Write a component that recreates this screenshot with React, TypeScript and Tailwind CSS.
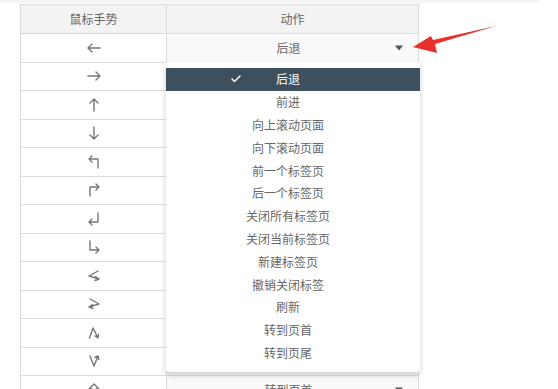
import { Check } from 'lucide-react';

// gesture drawings, viewBox 0 0 16 16
const gestures: string[] = [
  'M14 8H2 M6 4L2 8l4 4',
  'M2 8h12 M10 4l4 4-4 4',
  'M8 14V2 M4 6l4-4 4 4',
  'M8 2v12 M4 10l4 4 4-4',
  'M12 14V5H3 M6 2L3 5l3 3',
  'M4 14V5h9 M10 2l3 3-3 3',
  'M12 2v9H3 M6 8l-3 3 3 3',
  'M4 2v9h9 M10 8l3 3-3 3',
  'M12 3L3 8l10 3 M9.5 8.5l3.5 2.5-4 1.5',
  'M4 3l9 5-10 3 M6.5 8.5L3 11l4 1.5',
  'M3.5 13L7 3l5 10 M9 11l3 2 0.5-3.5',
  'M4 3l4 10 4-10 M9 4.5L12 3l0.8 3.5',
  'M8 2l5 5h-3v7H6V7H3z',
];

const actions = [
  '后退',
  '前进',
  '向上滚动页面',
  '向下滚动页面',
  '前一个标签页',
  '后一个标签页',
  '关闭所有标签页',
  '关闭当前标签页',
  '新建标签页',
  '撤销关闭标签',
  '刷新',
  '转到页首',
  '转到页尾',
];

// only the first and the last select show; the others sit under the open menu
const rowValues: (string | null)[] = ['后退', null, null, null, null, null, null, null, null, null, null, null, '转到页首'];

const Gesture = ({ d }: { d: string }) => (
  <svg width="16" height="16" viewBox="0 0 16 16" fill="none" stroke="#777" strokeWidth="1.4" strokeLinecap="round" strokeLinejoin="round">
    <path d={d} />
  </svg>
);

const Caret = () => (
  <span className="absolute right-[15px] top-1/2 -translate-y-1/2 w-0 h-0 border-l-[4px] border-r-[4px] border-t-[5px] border-l-transparent border-r-transparent border-t-[#555]" />
);

export default function App() {
  return (
    <div
      className="relative w-[558px] h-[389px] overflow-hidden bg-white text-[12px] text-[#666]"
      style={{ fontFamily: '"Noto Sans CJK SC", "Noto Sans", sans-serif' }}
    >
      {/* faint line left over from the section above */}
      <div className="h-[3px] w-[540px] bg-[#f4f4f4]" />

      <div className="ml-[20px] mt-[1px] w-[399px] border-l border-t border-[#dcdcdc]">
        {/* header */}
        <div className="flex h-[29px] bg-[#f3f3f3]">
          <div className="w-[146px] flex items-center justify-center border-r border-b border-[#dcdcdc]">鼠标手势</div>
          <div className="flex-1 flex items-center justify-center border-r border-b border-[#dcdcdc]">动作</div>
        </div>

        {gestures.map((g, i) => (
          <div key={i} className="flex h-[28.5px]">
            <div className="w-[146px] flex items-center justify-center border-r border-b border-[#dcdcdc]">
              <Gesture d={g} />
            </div>
            <div className="relative flex-1 flex items-center justify-center border-r border-b border-[#dcdcdc] bg-[#f9f9f9]">
              {rowValues[i] && <span className="pr-[8px]">{rowValues[i]}</span>}
              <Caret />
              {i === 0 && (
                <div className="absolute left-[-1px] top-[28px] z-10 w-[254px] bg-white pt-[6px] pb-[8px] rounded-b-[3px] shadow-[0_3px_6px_rgba(0,0,0,0.18)]">
                  {actions.map((a, j) =>
                    j === 0 ? (
                      <div key={a} className="relative flex h-[22.8px] items-center justify-center bg-[#3e505e] text-white pr-[10px]">
                        <Check className="absolute left-[64px] top-1/2 -translate-y-1/2" size={12} strokeWidth={3} color="#fff" />
                        {a}
                      </div>
                    ) : (
                      <div key={a} className="flex h-[22.8px] items-center justify-center pr-[10px]">
                        {a}
                      </div>
                    )
                  )}
                </div>
              )}
            </div>
          </div>
        ))}
      </div>

      {/* red annotation arrow */}
      <svg className="absolute left-0 top-0 pointer-events-none" width="558" height="389" viewBox="0 0 558 389">
        <polygon points="413,47 431,36 433,40 496,26 435,44 437,53" fill="#e8302c" />
      </svg>
    </div>
  );
}
